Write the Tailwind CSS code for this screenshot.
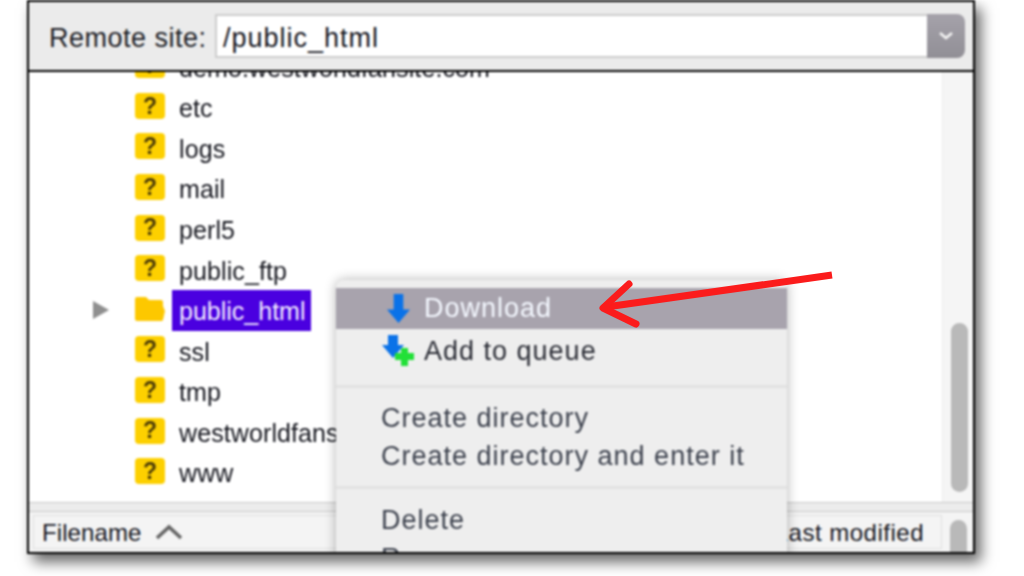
<!DOCTYPE html>
<html lang="en">
  <head>
    <meta charset="UTF-8" />
    <title>Remote site</title>
    <script src="https://cdn.jsdelivr.net/npm/@tailwindcss/browser@4"></script>
  </head>
  <body class="bg-white overflow-hidden">
    <div class="w-[1024px] h-[576px] pl-[27px] overflow-hidden font-['Liberation_Sans',sans-serif] text-[25px] tracking-[0.1px] text-[#15161e] blur-[0.8px]">
      <!-- Window -->
      <div class="relative w-[948px] h-[554px] border-[2.5px] border-black bg-white flex flex-col overflow-hidden shadow-[6px_8px_13px_rgba(0,0,0,0.6)]">
        <!-- Toolbar -->
        <div class="h-[70px] shrink-0 bg-[#ebebeb] border-b-2 border-black flex items-center pl-[20px] pr-[8px] pt-[5px] pb-[5px] text-[27px]">
          <span class="w-[166px] shrink-0 pt-[4px] tracking-[0.5px] text-[#1d1e26]">Remote site:</span>
          <div class="flex-1 h-[44px] flex items-stretch">
            <div class="flex-1 bg-white border-2 border-[#cdcdcd] border-r-0 flex items-center pl-[6px] pt-[4px] tracking-[1px]">/public_html</div>
            <div class="w-[38px] rounded-r-lg bg-gradient-to-b from-[#a5a2aa] to-[#918f96] flex items-center justify-center">
              <svg width="16" height="10" viewBox="0 0 16 10" fill="none" stroke="#f4f4f4" stroke-width="2.6"><path d="M2 2l6 5 6-5" /></svg>
            </div>
          </div>
        </div>

        <!-- Tree -->
        <div class="flex-1 flex min-h-0">
          <div class="flex-1 overflow-hidden pl-[106px]">
            <div class="-mt-[27px]">
              <div class="h-[40.6px] flex items-center gap-[14px]">
                <div class="relative w-[30px] h-[26px] rounded bg-[#fdd000] flex items-center justify-center font-bold text-[23px] text-[#4a3a08]">?</div>
                <span class="pt-[6px]">demo.westworldfansite.com</span>
              </div>
              <div class="h-[40.6px] flex items-center gap-[14px]">
                <div class="w-[30px] h-[26px] rounded bg-[#fdd000] flex items-center justify-center font-bold text-[23px] text-[#4a3a08]">?</div>
                <span class="pt-[6px]">etc</span>
              </div>
              <div class="h-[40.6px] flex items-center gap-[14px]">
                <div class="w-[30px] h-[26px] rounded bg-[#fdd000] flex items-center justify-center font-bold text-[23px] text-[#4a3a08]">?</div>
                <span class="pt-[6px]">logs</span>
              </div>
              <div class="h-[40.6px] flex items-center gap-[14px]">
                <div class="w-[30px] h-[26px] rounded bg-[#fdd000] flex items-center justify-center font-bold text-[23px] text-[#4a3a08]">?</div>
                <span class="pt-[6px]">mail</span>
              </div>
              <div class="h-[40.6px] flex items-center gap-[14px]">
                <div class="w-[30px] h-[26px] rounded bg-[#fdd000] flex items-center justify-center font-bold text-[23px] text-[#4a3a08]">?</div>
                <span class="pt-[6px]">perl5</span>
              </div>
              <div class="h-[40.6px] flex items-center gap-[14px]">
                <div class="w-[30px] h-[26px] rounded bg-[#fdd000] flex items-center justify-center font-bold text-[23px] text-[#4a3a08]">?</div>
                <span class="pt-[6px]">public_ftp</span>
              </div>
              <div class="relative h-[40.6px] flex items-center gap-[7px]">
                <svg class="absolute -left-[42px] top-[12px]" width="16" height="18" viewBox="0 0 16 18"><path d="M0 0l16 9-16 9z" fill="#8f8f8f" /></svg>
                <svg width="30" height="26" viewBox="0 0 30 26"><path d="M0 3a2 2 0 0 1 2-2h9l3 3h12a2 2 0 0 1 2 2v4l2 5-2 9a2 2 0 0 1-2 1H2a2 2 0 0 1-2-2z" fill="#fdc800" /></svg>
                <span class="relative top-[2px] h-[41px] flex items-center pl-[7px] pr-[6px] pt-[2px] tracking-normal bg-[#4a00e0] text-[#f4efff]">public_html</span>
              </div>
              <div class="h-[40.6px] flex items-center gap-[14px]">
                <div class="w-[30px] h-[26px] rounded bg-[#fdd000] flex items-center justify-center font-bold text-[23px] text-[#4a3a08]">?</div>
                <span class="pt-[6px]">ssl</span>
              </div>
              <div class="h-[40.6px] flex items-center gap-[14px]">
                <div class="w-[30px] h-[26px] rounded bg-[#fdd000] flex items-center justify-center font-bold text-[23px] text-[#4a3a08]">?</div>
                <span class="pt-[6px]">tmp</span>
              </div>
              <div class="h-[40.6px] flex items-center gap-[14px]">
                <div class="w-[30px] h-[26px] rounded bg-[#fdd000] flex items-center justify-center font-bold text-[23px] text-[#4a3a08]">?</div>
                <span class="pt-[6px]">westworldfansite.com</span>
              </div>
              <div class="h-[40.6px] flex items-center gap-[14px]">
                <div class="w-[30px] h-[26px] rounded bg-[#fdd000] flex items-center justify-center font-bold text-[23px] text-[#4a3a08]">?</div>
                <span class="pt-[6px]">www</span>
              </div>
            </div>
          </div>
          <!-- Tree scrollbar -->
          <div class="w-[31px] shrink-0 bg-[#f5f5f5] border-l border-[#ececec] pl-[8px] pt-[251px]">
            <div class="w-[17px] h-[169px] rounded-full bg-[#b9b9b9]"></div>
          </div>
        </div>

        <!-- Sash -->
        <div class="h-[10px] shrink-0 bg-[#ececec] border-y border-[#c8c8c8]"></div>

        <!-- List header -->
        <div class="h-[40px] shrink-0 flex bg-[#f4f4f4] pt-[3px] pb-[3px]">
          <div class="flex-1 flex items-center justify-between pl-[8px] pr-[17px] pt-[2px] border border-[#e0e0e0] ml-[4px] text-[24px]">
            <span class="flex items-center gap-[13px]">
              Filename
              <svg class="-mt-[3px]" width="28" height="18" viewBox="0 0 28 18" fill="none" stroke="#666" stroke-width="3.6"><path d="M2 15L14 4l12 11" /></svg>
            </span>
            <span class="tracking-[0.5px]">Last modified</span>
          </div>
          <div class="w-[31px] shrink-0 pl-[8px] pt-[5px]">
            <div class="w-[17px] h-[60px] rounded-full bg-[#b9b9b9]"></div>
          </div>
        </div>

        <!-- Context menu -->
        <div class="absolute left-[307px] top-[278px] w-[451px] h-[320px] bg-[#eeeeee] rounded-t-lg pt-[8px] shadow-[0_0_12px_rgba(0,0,0,0.3)] text-[#3c414d] text-[27px] tracking-[1px]">
          <div class="h-[41px] bg-[#a8a3ad] flex items-center pl-[50px] gap-[13px] text-[#f4f8ff]">
            <svg width="25" height="31" viewBox="0 0 26 30"><path d="M8 0h10v16h7L13 30 1 16h7z" fill="#0a72e8" /></svg>
            <span>Download</span>
          </div>
          <div class="h-[44px] flex items-center pl-[46px] gap-[10px] text-[#2a2c35]">
            <svg width="32" height="32" viewBox="0 0 32 32"><path d="M6 0h10v10h6L11 23 0 10h6z" fill="#0a72e8" /><path d="M19 13h7v5h6v7h-6v6h-7v-6h-6v-7h6z" fill="#22e038" /></svg>
            <span>Add to queue</span>
          </div>
          <div class="h-[15px] border-b-[3px] border-[#e2e2e2]"></div>
          <div class="pl-[45px] pt-[11px]">
            <div class="h-[38px] flex items-center">Create directory</div>
            <div class="h-[38px] flex items-center">Create directory and enter it</div>
          </div>
          <div class="h-[14px] border-b-[3px] border-[#e2e2e2]"></div>
          <div class="pl-[45px] pt-[12px]">
            <div class="h-[38px] flex items-center">Delete</div>
            <div class="h-[38px] flex items-center">Rename</div>
          </div>
        </div>
      </div>
    </div>

    <!-- Red annotation arrow -->
    <svg class="absolute left-0 top-0" width="1024" height="576" fill="none" stroke="#fb1c1c" stroke-width="7" stroke-linejoin="round">
      <path d="M832 275L606 307" />
      <path d="M629 284L603 308 636 324" stroke-linecap="round" />
    </svg>
  </body>
</html>
